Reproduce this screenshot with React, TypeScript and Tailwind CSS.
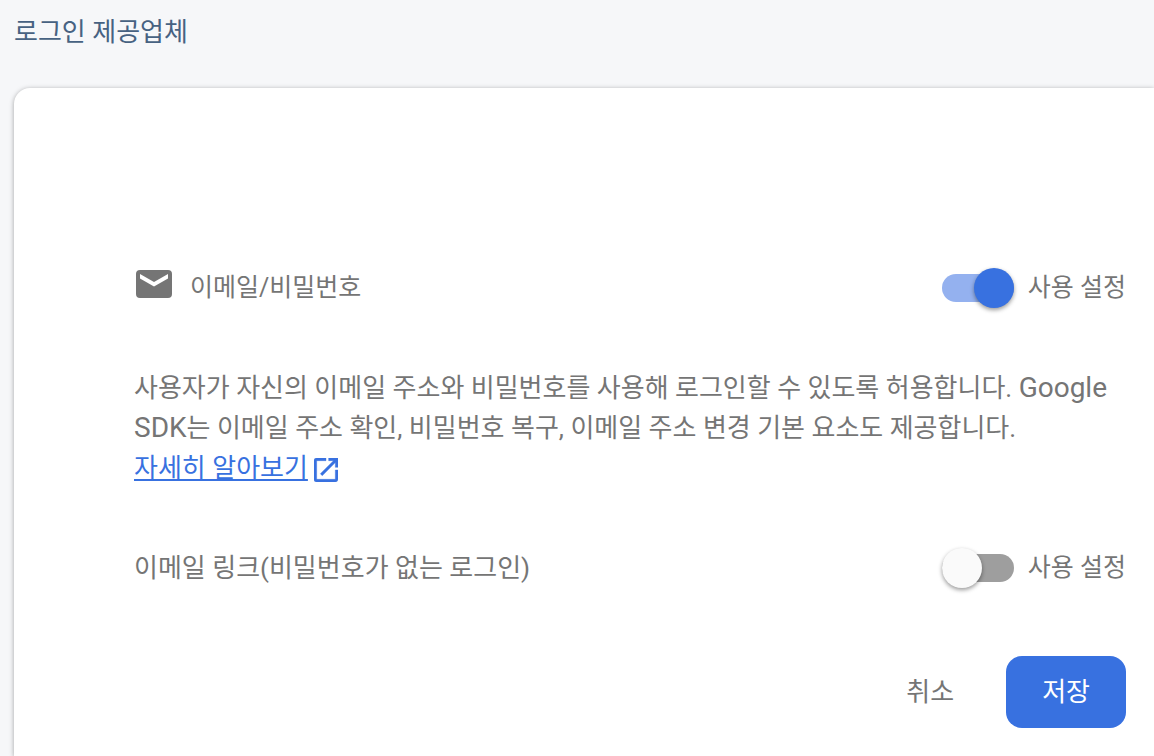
import { useState } from 'react';

const FONT = "font-[Roboto,'Noto_Sans_CJK_KR',sans-serif]";

interface ToggleProps {
  label: string;
  name: string;
  checked: boolean;
  onChange: (value: boolean) => void;
}

function Toggle({ label, name, checked, onChange }: ToggleProps) {
  return (
    <label className="flex shrink-0 cursor-pointer items-center gap-3.5">
      <span className="relative flex h-10 w-18 items-center">
        <input
          type="checkbox"
          role="switch"
          name={name}
          checked={checked}
          onChange={(e) => onChange(e.target.checked)}
          className="peer h-7 w-full cursor-pointer appearance-none rounded-full bg-[#9e9e9e] checked:bg-[#94b1ef]"
        />
        <span className="pointer-events-none absolute left-0 top-0 size-10 rounded-full bg-[#fafafa] shadow-[0_2px_4px_rgba(0,0,0,0.4)] peer-checked:left-8 peer-checked:bg-[#3871e0]" />
      </span>
      <span className="text-[25px] leading-10">{label}</span>
    </label>
  );
}

export default function App() {
  const [passwordEnabled, setPasswordEnabled] = useState(true);
  const [linkEnabled, setLinkEnabled] = useState(false);

  return (
    <div className={`flex min-h-screen flex-col bg-[#f6f7f9] pl-3.5 text-[#757575] ${FONT}`}>
      <h1 className="pb-9 pt-3 text-[26px] leading-10 text-[#476282]">로그인 제공업체</h1>

      <main className="flex grow flex-col rounded-tl-2xl bg-white pb-7 pl-30 pr-7 pt-45 shadow-[0_1px_5px_rgba(0,0,0,0.35)]">
        <div className="flex items-center justify-between">
          <h2 className="flex items-center gap-4 text-[25px] leading-10">
            <svg viewBox="0 0 40 40" className="size-10" fill="currentColor" aria-hidden="true">
              <path d="M34 2H6a4 4 0 0 0-4 4v20a4 4 0 0 0 4 4h28a4 4 0 0 0 4-4V6a4 4 0 0 0-4-4zm0 8.5-14 8L6 10.500V6l14 8 14-8z" />
            </svg>
            이메일/비밀번호
          </h2>
          <Toggle label="사용 설정" name="password" checked={passwordEnabled} onChange={setPasswordEnabled} />
        </div>

        <p className="py-15 text-[26px] leading-10">
          사용자가 자신의 이메일 주소와 비밀번호를 사용해 로그인할 수 있도록 허용합니다.{' '}
          <span className="text-[28px]">Google SDK</span>는 이메일 주소 확인, 비밀번호 복구, 이메일 주소 변경 기본 요소도 제공합니다.{' '}
          <a href="#learn" className="inline-flex items-center gap-1.5 text-[#3871e0]">
            <span className="underline">자세히 알아보기</span>
            <svg viewBox="3 3 18 18" className="mt-1 size-6" fill="currentColor" stroke="currentColor" strokeWidth="0.3" aria-hidden="true">
              <path d="M19 19H5V5h7V3H5a2 2 0 0 0-2 2v14a2 2 0 0 0 2 2h14c1.1 0 2-.9 2-2v-7h-2v7zM14 3v2h3.59l-9.83 9.83 1.41 1.41L19 6.41V10h2V3h-7z" />
            </svg>
          </a>
        </p>

        <div className="flex items-center justify-between">
          <h2 className="text-[26px] leading-10">이메일 링크(비밀번호가 없는 로그인)</h2>
          <Toggle label="사용 설정" name="email-link" checked={linkEnabled} onChange={setLinkEnabled} />
        </div>

        <div className="flex justify-end gap-4 pt-17">
          <button type="button" className="h-18 px-9 text-[26px]">취소</button>
          <button type="button" className="h-18 rounded-2xl bg-[#3871e0] px-9 text-[26px] text-white">저장</button>
        </div>
      </main>
    </div>
  );
}
